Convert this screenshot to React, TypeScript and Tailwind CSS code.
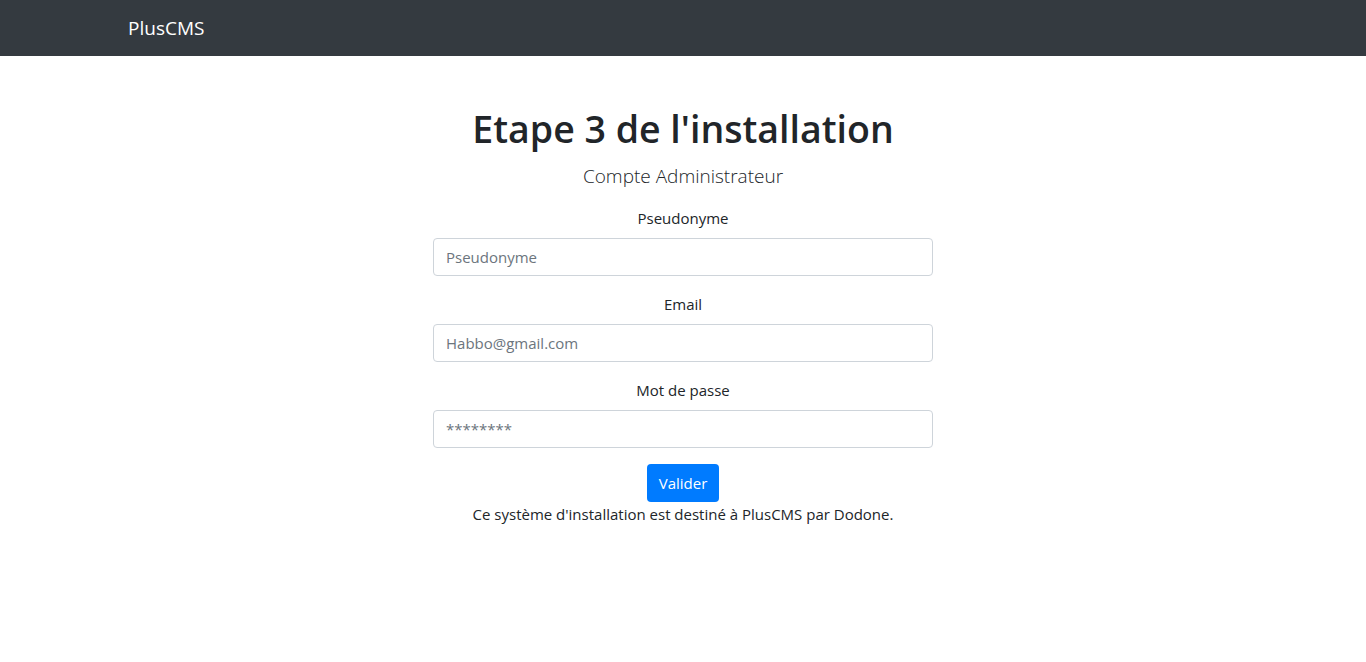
import React from "react";

const font = { fontFamily: '"Open Sans", "Noto Sans", Arial, sans-serif' };

function Field({ label, placeholder, type = "text" }: { label: string; placeholder: string; type?: string }) {
  return (
    <div className="mb-4 flex flex-col items-center">
      <label className="mb-2 block text-[15px] leading-[24px] text-[#212529]">{label}</label>
      <input
        type={type}
        placeholder={placeholder}
        className="h-[38px] w-[500px] rounded-[4px] border border-[#ced4da] bg-white px-3 text-[15px] text-[#495057] outline-none placeholder:text-[#6c757d]"
      />
    </div>
  );
}

export default function App() {
  return (
    <div className="min-h-[662px] bg-white text-[#212529]" style={font}>
      <nav className="h-[56px] bg-[#343a40]">
        <div className="mx-auto flex h-full w-[1140px] items-center px-[15px]">
          <span className="text-[19px] leading-[30px] text-white">PlusCMS</span>
        </div>
      </nav>
      <div className="mx-auto mt-12 flex w-[1140px] flex-col items-center px-[15px] text-center">
        <h1 className="mb-2 pt-[2px] text-[37.5px] font-semibold leading-[46px]">Etape 3 de l'installation</h1>
        <p className="mb-4 pt-[2px] text-[19px] font-light leading-[28px]">Compte Administrateur</p>
        <form className="flex flex-col items-center" onSubmit={(e) => e.preventDefault()}>
          <Field label="Pseudonyme" placeholder="Pseudonyme" />
          <Field label="Email" placeholder="Habbo@gmail.com" type="email" />
          <Field label="Mot de passe" placeholder="********" type="password" />
          <button
            type="submit"
            className="h-[38px] rounded-[4px] bg-[#007bff] px-3 text-[15px] leading-[24px] text-white"
          >
            Valider
          </button>
        </form>
        <p className="text-[15px] leading-[24px]">Ce système d'installation est destiné à PlusCMS par Dodone.</p>
      </div>
    </div>
  );
}
